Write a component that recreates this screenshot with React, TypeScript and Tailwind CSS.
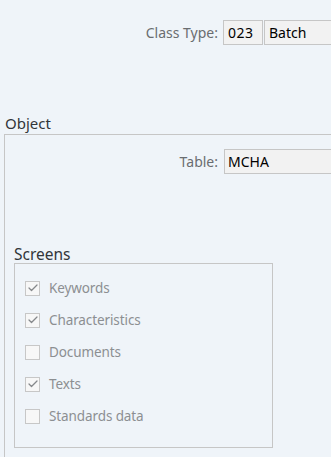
import { Check } from "lucide-react";

type Screen = { label: string; checked: boolean };

const screens: Screen[] = [
  { label: "Keywords", checked: true },
  { label: "Characteristics", checked: true },
  { label: "Documents", checked: false },
  { label: "Texts", checked: true },
  { label: "Standards data", checked: false },
];

export default function App() {
  return (
    <div
      className="w-[331px] h-[457px] overflow-hidden bg-[#eff4f9] text-[#32363a]"
      style={{ fontFamily: '"Noto Sans", "Open Sans", sans-serif' }}
    >
      {/* class type row */}
      <div className="flex items-center pt-[20px] h-[45px]">
        <label className="w-[218px] text-right text-[14px] text-[#6a6d70] shrink-0">
          Class Type:
        </label>
        <div className="ml-[5px] w-[40px] h-[25px] border border-[#c6c6c6] bg-[#f2f2f2] flex items-center px-[4px] text-[14px] text-black shrink-0 tracking-[0.5px]">
          023
        </div>
        <div className="ml-[1px] w-[120px] h-[25px] border border-[#c6c6c6] bg-[#f2f2f2] flex items-center px-[4px] text-[14px] text-black shrink-0">
          Batch
        </div>
      </div>

      {/* object group */}
      <div className="mt-[66px] pl-[4px]">
        <h3 className="text-[15px] leading-[24px] pl-[1px] h-[23px]">Object</h3>
        <div className="border-l border-t border-[#c6c6c6] h-[330px] w-[400px]">
          <div className="flex items-center mt-[14px]">
            <label className="w-[213px] text-right text-[14px] text-[#6a6d70] shrink-0">
              Table:
            </label>
            <div className="ml-[6px] w-[160px] h-[25px] border border-[#c6c6c6] bg-[#f2f2f2] flex items-center px-[3px] text-[14px] text-black shrink-0">
              MCHA
            </div>
          </div>

          <div className="mt-[69px] pl-[9px]">
            <h4 className="text-[15.5px] leading-[22px] h-[20px]">Screens</h4>
            <div className="w-[259px] h-[185px] border border-[#c6c6c6] pt-[8px]">
              {screens.map((s) => (
                <div key={s.label} className="h-[32px] flex items-center pl-[10px]">
                  <span className="w-[15px] h-[15px] border border-[#c7c7c7] bg-[#f7f7f7] flex items-center justify-center">
                    {s.checked && <Check size={12} strokeWidth={2.5} className="text-[#85888b]" />}
                  </span>
                  <span className="ml-[9px] text-[13.5px] text-[#8c8f92] tracking-[-0.1px]">{s.label}</span>
                </div>
              ))}
            </div>
          </div>
        </div>
      </div>
    </div>
  );
}
